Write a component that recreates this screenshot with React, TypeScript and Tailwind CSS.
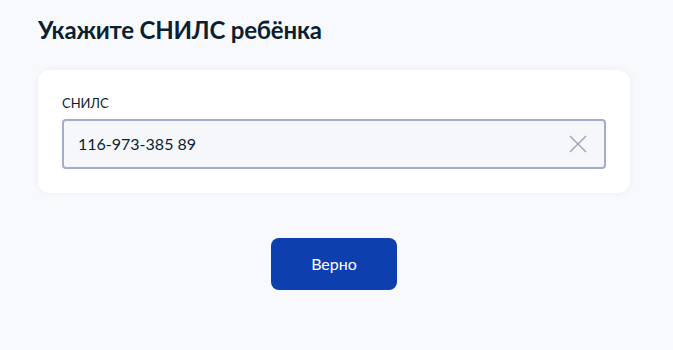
export default function App() {
  return (
    <div className="min-h-[350px] w-full bg-[#f8f9fc] px-[38px] pt-[15px] font-['Lato','Noto_Sans',sans-serif]">
      <h1 className="text-[24px] font-bold leading-[30px] text-[#0b1f33] tracking-[-0.2px]">
        Укажите СНИЛС ребёнка
      </h1>
      <div className="mt-[25px] w-[592px] rounded-[12px] bg-white px-[24px] pt-[24px] pb-[24px] shadow-[0_0_6px_rgba(180,190,220,0.18)]">
        <div className="text-[13px] leading-[18px] text-[#0b1f33]">СНИЛС</div>
        <div className="mt-[7px] flex h-[50px] items-center justify-between rounded-[4px] border-[2px] border-[#a3acd0] bg-[#f5f7fa] pl-[14px] pr-[16px]">
          <span className="text-[16px] text-[#0b1f33]">116-973-385 89</span>
          <svg width="20" height="20" viewBox="0 0 20 20" fill="none">
            <path d="M2 2L18 18M18 2L2 18" stroke="#9aa3b5" strokeWidth="1.4" />
          </svg>
        </div>
      </div>
      <div className="mt-[45px] flex w-[592px] justify-center">
        <button className="h-[52px] w-[126px] rounded-[8px] bg-[#0d3fae] text-[16px] text-white">
          Верно
        </button>
      </div>
    </div>
  );
}
